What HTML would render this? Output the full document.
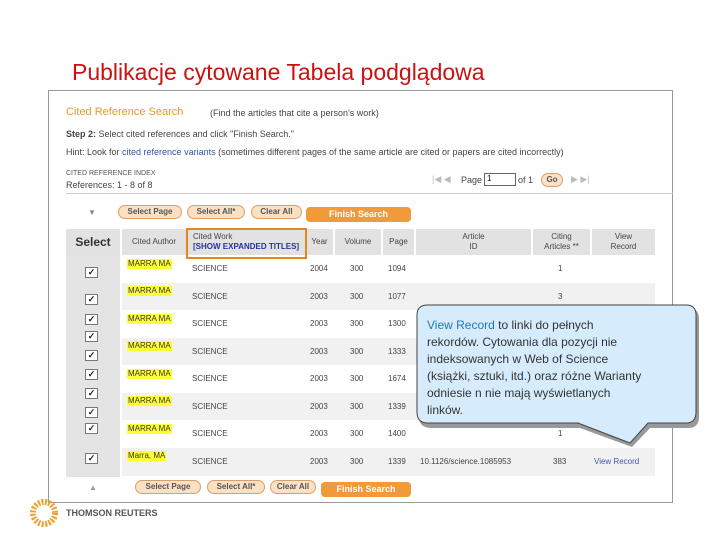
<!DOCTYPE html>
<html><head><meta charset="utf-8"><style>
*{margin:0;padding:0;box-sizing:border-box}
body{width:720px;height:540px;background:#fff;position:relative;overflow:hidden;font-family:"Liberation Sans",sans-serif}
.a{position:absolute;white-space:nowrap}
.s{font-size:9px;color:#444}
.btn{position:absolute;height:14px;border:1px solid #d9a06a;background:#fbe0c4;border-radius:7px;font-size:8px;color:#555;text-align:center;line-height:12px;font-weight:bold}
.fin{position:absolute;height:15px;background:#f09a3a;border-radius:4px;color:#fff;font-size:9px;font-weight:bold;text-align:center;line-height:15px}
.hd{position:absolute;top:229px;height:26px;background:#e2e2e2;font-size:8px;color:#444;text-align:center;display:flex;align-items:center;justify-content:center;line-height:10px}
.cb{position:absolute;left:85px;width:13px;height:11px;border:1px solid #777;background:#fff;font-size:9px;line-height:9px;text-align:center;color:#222;font-weight:bold}
.au{position:absolute;left:127px;background:#ffff33;font-size:8px;color:#333;padding:0 1px;line-height:10px}
.c{position:absolute;font-size:8px;color:#444;white-space:nowrap}
</style></head><body>
<div class="a" style="left:72px;top:59px;font-size:23px;color:#cc1111">Publikacje cytowane Tabela podglądowa</div>
<div class="a" style="left:48px;top:90px;width:625px;height:413px;border:1px solid #999"></div>
<div class="a" style="left:66px;top:106px;font-size:11px;color:#e39a2c">Cited Reference Search</div>
<div class="a s" style="left:210px;top:108px">(Find the articles that cite a person's work)</div>
<div class="a s" style="left:66px;top:129px"><b>Step 2:</b> Select cited references and click "Finish Search."</div>
<div class="a s" style="left:66px;top:147px">Hint: Look for <span style="color:#3355aa">cited reference variants</span> (sometimes different pages of the same article are cited or papers are cited incorrectly)</div>
<div class="a" style="left:66px;top:170px;font-size:7px;color:#555">CITED REFERENCE INDEX</div>
<div class="a s" style="left:66px;top:180px">References: 1 - 8 of 8</div>
<div class="a" style="left:432px;top:174px;font-size:9px;color:#bbb">|◀ ◀</div>
<div class="a s" style="left:461px;top:175px">Page</div>
<div class="a" style="left:484px;top:173px;width:32px;height:13px;border:1px solid #666;font-size:8px;padding-left:2px">1</div>
<div class="a s" style="left:518px;top:175px">of 1</div>
<div class="btn" style="left:541px;top:173px;width:22px">Go</div>
<div class="a" style="left:571px;top:174px;font-size:9px;color:#bbb">▶ ▶|</div>
<div class="a" style="left:66px;top:193px;width:607px;height:1px;background:#ccc"></div>
<div class="a" style="left:88px;top:208px;font-size:8px;color:#888">▼</div>
<div class="btn" style="left:118px;top:205px;width:64px">Select Page</div>
<div class="btn" style="left:187px;top:205px;width:58px">Select All*</div>
<div class="btn" style="left:251px;top:205px;width:51px">Clear All</div>
<div class="fin" style="left:306px;top:207px;width:105px">Finish Search</div>
<div class="a" style="left:66px;top:229px;width:54px;height:248px;background:#e4e4e4"></div>
<div class="hd" style="left:66px;width:54px;font-size:12px;font-weight:bold;color:#333">Select</div>
<div class="hd" style="left:122px;width:64px">Cited Author</div>
<div class="hd" style="left:188px;width:117px;flex-direction:column;align-items:flex-start;padding-left:5px"><span>Cited Work</span><span style="color:#2233aa;font-weight:bold">[SHOW EXPANDED TITLES]</span></div>
<div class="hd" style="left:306px;width:27px">Year</div>
<div class="hd" style="left:335px;width:46px">Volume</div>
<div class="hd" style="left:383px;width:31px">Page</div>
<div class="hd" style="left:416px;width:115px">Article<br>ID</div>
<div class="hd" style="left:533px;width:57px">Citing<br>Articles **</div>
<div class="hd" style="left:592px;width:63px">View<br>Record</div>
<div class="a" style="left:186px;top:228px;width:121px;height:31px;border:2px solid #e08a1e"></div>
<div class="a" style="left:122px;top:283px;width:533px;height:27px;background:#f1f1f1"></div>
<div class="a" style="left:122px;top:338px;width:533px;height:27px;background:#f1f1f1"></div>
<div class="a" style="left:122px;top:393px;width:533px;height:27px;background:#f1f1f1"></div>
<div class="a" style="left:122px;top:448px;width:533px;height:28px;background:#f1f1f1"></div>
<div class="cb" style="top:267px">✓</div><div class="cb" style="top:294px">✓</div><div class="cb" style="top:314px">✓</div><div class="cb" style="top:331px">✓</div><div class="cb" style="top:350px">✓</div><div class="cb" style="top:369px">✓</div><div class="cb" style="top:388px">✓</div><div class="cb" style="top:407px">✓</div><div class="cb" style="top:423px">✓</div><div class="cb" style="top:453px">✓</div>
<div class="au" style="top:259px">MARRA MA</div><div class="c" style="left:192px;top:264px">SCIENCE</div><div class="c" style="left:310px;top:264px">2004</div><div class="c" style="left:350px;top:264px">300</div><div class="c" style="left:388px;top:264px">1094</div><div class="c" style="left:558px;top:264px">1</div>
<div class="au" style="top:286px">MARRA MA</div><div class="c" style="left:192px;top:292px">SCIENCE</div><div class="c" style="left:310px;top:292px">2003</div><div class="c" style="left:350px;top:292px">300</div><div class="c" style="left:388px;top:292px">1077</div><div class="c" style="left:558px;top:292px">3</div>
<div class="au" style="top:314px">MARRA MA</div><div class="c" style="left:192px;top:319px">SCIENCE</div><div class="c" style="left:310px;top:319px">2003</div><div class="c" style="left:350px;top:319px">300</div><div class="c" style="left:388px;top:319px">1300</div>
<div class="au" style="top:341px">MARRA MA</div><div class="c" style="left:192px;top:347px">SCIENCE</div><div class="c" style="left:310px;top:347px">2003</div><div class="c" style="left:350px;top:347px">300</div><div class="c" style="left:388px;top:347px">1333</div>
<div class="au" style="top:369px">MARRA MA</div><div class="c" style="left:192px;top:374px">SCIENCE</div><div class="c" style="left:310px;top:374px">2003</div><div class="c" style="left:350px;top:374px">300</div><div class="c" style="left:388px;top:374px">1674</div>
<div class="au" style="top:396px">MARRA MA</div><div class="c" style="left:192px;top:402px">SCIENCE</div><div class="c" style="left:310px;top:402px">2003</div><div class="c" style="left:350px;top:402px">300</div><div class="c" style="left:388px;top:402px">1339</div>
<div class="au" style="top:424px">MARRA MA</div><div class="c" style="left:192px;top:429px">SCIENCE</div><div class="c" style="left:310px;top:429px">2003</div><div class="c" style="left:350px;top:429px">300</div><div class="c" style="left:388px;top:429px">1400</div><div class="c" style="left:558px;top:429px">1</div>
<div class="au" style="top:451px">Marra, MA</div><div class="c" style="left:192px;top:457px">SCIENCE</div><div class="c" style="left:310px;top:457px">2003</div><div class="c" style="left:350px;top:457px">300</div><div class="c" style="left:388px;top:457px">1339</div><div class="c" style="left:420px;top:457px">10.1126/science.1085953</div><div class="c" style="left:553px;top:457px">383</div><div class="c" style="left:594px;top:457px;color:#4455aa">View Record</div>
<div class="a" style="left:89px;top:483px;font-size:8px;color:#999">▲</div>
<div class="btn" style="left:135px;top:480px;width:66px">Select Page</div>
<div class="btn" style="left:207px;top:480px;width:58px">Select All*</div>
<div class="btn" style="left:270px;top:480px;width:46px">Clear All</div>
<div class="fin" style="left:321px;top:482px;width:90px">Finish Search</div>
<svg class="a" style="left:410px;top:300px" width="300" height="150"><path d="M20 6 H276 Q287 6 287 17 V115 Q287 126 276 126 H238 L220 145 L168 126 H20 Q7 126 7 115 V17 Q7 6 20 6 Z" fill="#999" transform="translate(2,2)"/><path d="M18 5 H276 Q286 5 286 15 V112 Q286 123 276 123 H238 L220 143 L168 123 H18 Q7 123 7 112 V15 Q7 5 18 5 Z" fill="#d6ecfc" stroke="#444" stroke-width="1"/></svg>
<div class="a" style="left:427px;top:317px;font-size:12px;line-height:17px;color:#333">
<span style="color:#2277bb">View Record</span> to linki do pełnych<br>rekordów. Cytowania dla pozycji nie<br>indeksowanych w Web of Science<br>(książki, sztuki, itd.) oraz różne Warianty<br>odniesie n nie mają wyświetlanych<br>linków.</div>
<svg class="a" style="left:28px;top:498px" width="32" height="30"><circle cx="16" cy="15" r="11" fill="none" stroke="#f0a030" stroke-width="6" stroke-dasharray="2 1.5"/></svg>
<div class="a" style="left:66px;top:508px;font-size:9px;font-weight:bold;color:#555">THOMSON REUTERS</div>
</body></html>
